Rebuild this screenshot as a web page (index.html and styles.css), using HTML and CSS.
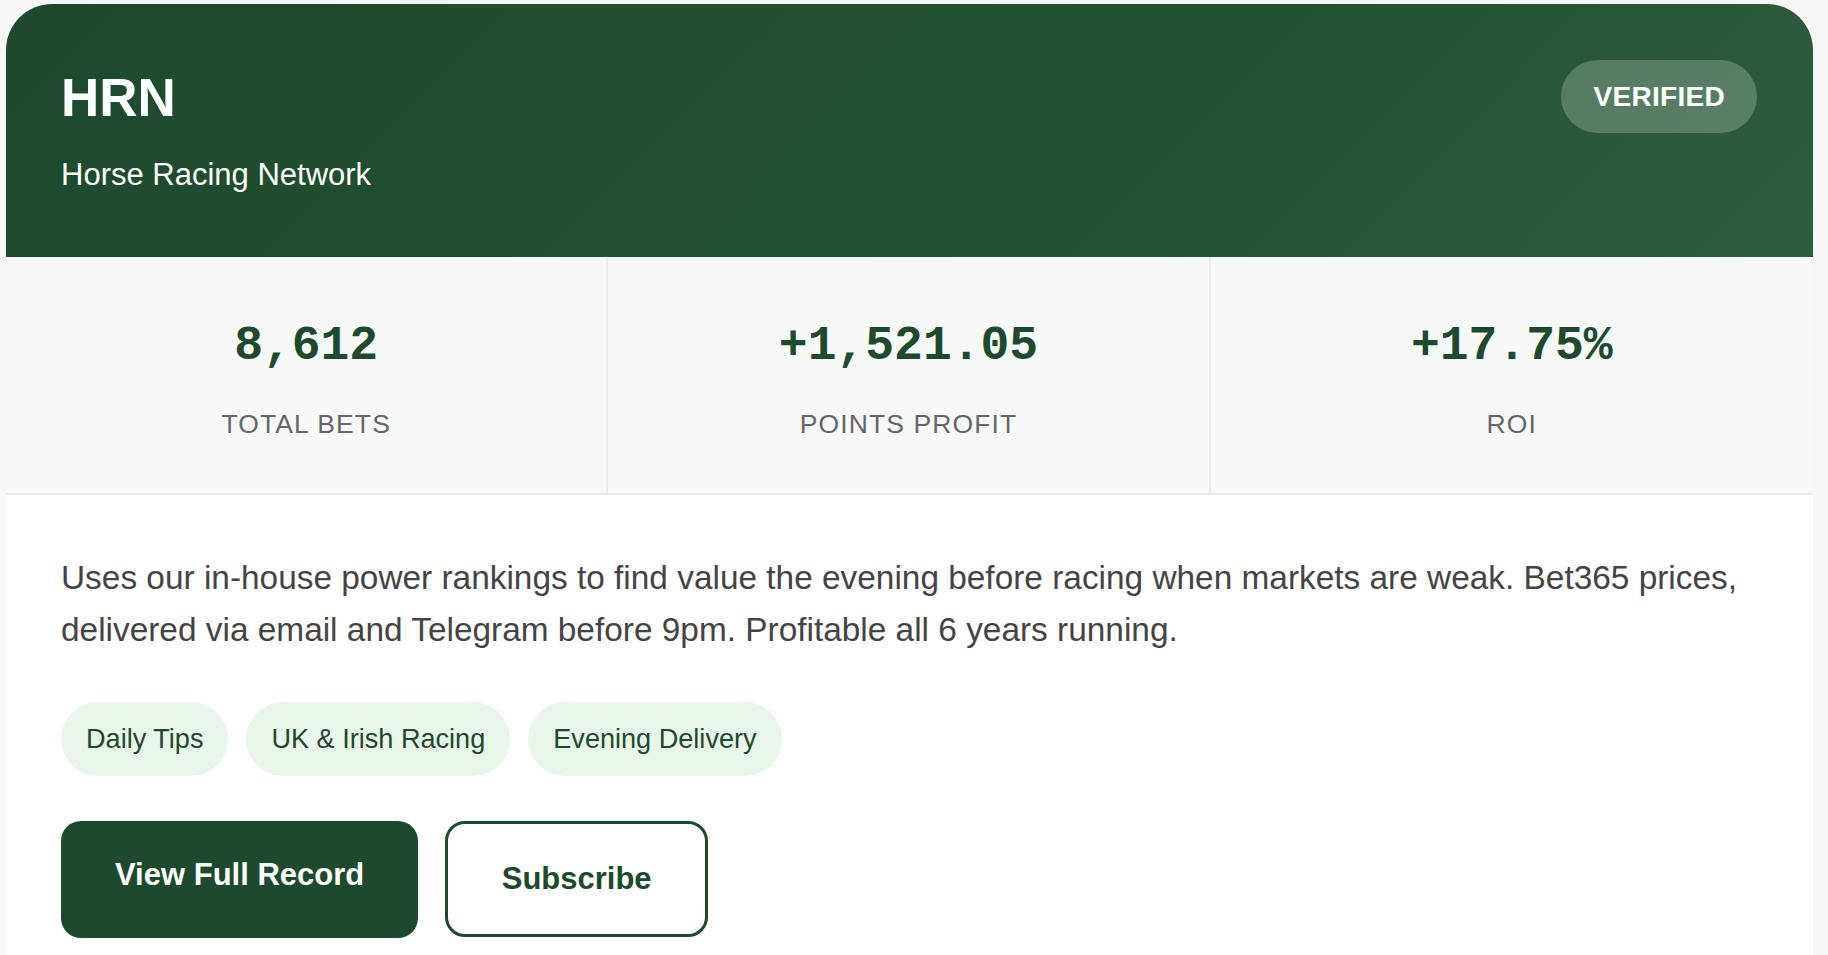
FILE: index.html
```html
<!DOCTYPE html>
<html lang="en">
<head>
<meta charset="utf-8">
<title>HRN - Horse Racing Network</title>
<link rel="stylesheet" href="styles.css">
</head>
<body>
<div class="card">
  <header class="card-header">
    <div class="brand">
      <h1 class="brand-title">HRN</h1>
      <p class="brand-sub">Horse Racing Network</p>
    </div>
    <span class="badge">VERIFIED</span>
  </header>
  <section class="stats">
    <div class="stat">
      <div class="stat-value">8,612</div>
      <div class="stat-label">TOTAL BETS</div>
    </div>
    <div class="stat">
      <div class="stat-value">+1,521.05</div>
      <div class="stat-label">POINTS PROFIT</div>
    </div>
    <div class="stat">
      <div class="stat-value">+17.75%</div>
      <div class="stat-label">ROI</div>
    </div>
  </section>
  <section class="card-body">
    <p class="desc">Uses our in-house power rankings to find value the evening before racing when markets are weak. Bet365 prices, delivered via email and Telegram before 9pm. Profitable all 6 years running.</p>
    <div class="tags">
      <span class="tag">Daily Tips</span>
      <span class="tag">UK &amp; Irish Racing</span>
      <span class="tag">Evening Delivery</span>
    </div>
    <div class="actions">
      <a class="btn btn-primary" href="#">View Full Record</a>
      <button class="btn btn-outline" type="button">Subscribe</button>
    </div>
  </section>
</div>
</body>
</html>
```

FILE: styles.css
```css
html, body {
  margin: 0;
  padding: 0;
  height: 955px;
  overflow: hidden;
}

body {
  background: #f6f7f6;
  font-family: "Liberation Sans", Arial, sans-serif;
}

.card {
  width: 1807px;
  margin: 4px 0 0 6px;
  background: #ffffff;
  border-radius: 46px 46px 0 0;
  overflow: hidden;
}

.card-header {
  display: flex;
  justify-content: space-between;
  align-items: flex-start;
  padding: 56px 56px 64.5px 55px;
  background: linear-gradient(135deg, #1d4a2d 0%, #21502f 50%, #2e5d3e 100%);
  color: #ffffff;
}

.brand {
  padding-top: 6px;
}

.brand-title {
  margin: 0;
  font-size: 53px;
  line-height: 64px;
  font-weight: 700;
}

.brand-sub {
  margin: 26.5px 0 0;
  font-size: 31px;
  line-height: 36px;
}

.badge {
  display: inline-block;
  padding: 18.5px 32px;
  font-size: 28px;
  line-height: 36px;
  font-weight: 700;
  letter-spacing: 0.3px;
  border-radius: 999px;
  background: rgba(255, 255, 255, 0.22);
  color: #ffffff;
}

.stats {
  display: grid;
  grid-template-columns: repeat(3, 1fr);
  background: #f7f9f8;
  border-bottom: 2px solid #e8ebe9;
}

.stat {
  padding: 62px 0 54px;
  text-align: center;
  border-right: 2px solid #e8ebe9;
}

.stat:last-child {
  border-right: none;
}

.stat-value {
  font-family: "Liberation Mono", "Courier New", monospace;
  font-weight: 700;
  font-size: 48px;
  line-height: 54px;
  color: #1d4a2c;
}

.stat-label {
  margin-top: 36px;
  font-size: 26.5px;
  line-height: 30px;
  letter-spacing: 1.1px;
  color: #666666;
}

.card-body {
  padding: 57px 56px 56px 55px;
}

.desc {
  margin: 0;
  font-size: 33.4px;
  line-height: 52.4px;
  color: #444444;
}

.tags {
  display: flex;
  gap: 18px;
  margin-top: 45px;
}

.tag {
  padding: 21px 25px;
  font-size: 27.1px;
  line-height: 32px;
  color: #1d4a2c;
  background: #e8f5e9;
  border-radius: 999px;
}

.actions {
  display: flex;
  align-items: flex-start;
  gap: 27px;
  margin-top: 45px;
}

.btn {
  display: inline-block;
  font-family: "Liberation Sans", Arial, sans-serif;
  font-size: 31px;
  line-height: 36px;
  font-weight: 700;
  border-radius: 20px;
  text-decoration: none;
  cursor: pointer;
}

.btn-primary {
  padding: 36px 54px 45px;
  background: #1d4a2c;
  color: #ffffff;
}

.btn-outline {
  padding: 37px 53.5px 37.5px;
  background: #ffffff;
  color: #1d4a2c;
  border: 3.5px solid #1d4a2c;
}
```
